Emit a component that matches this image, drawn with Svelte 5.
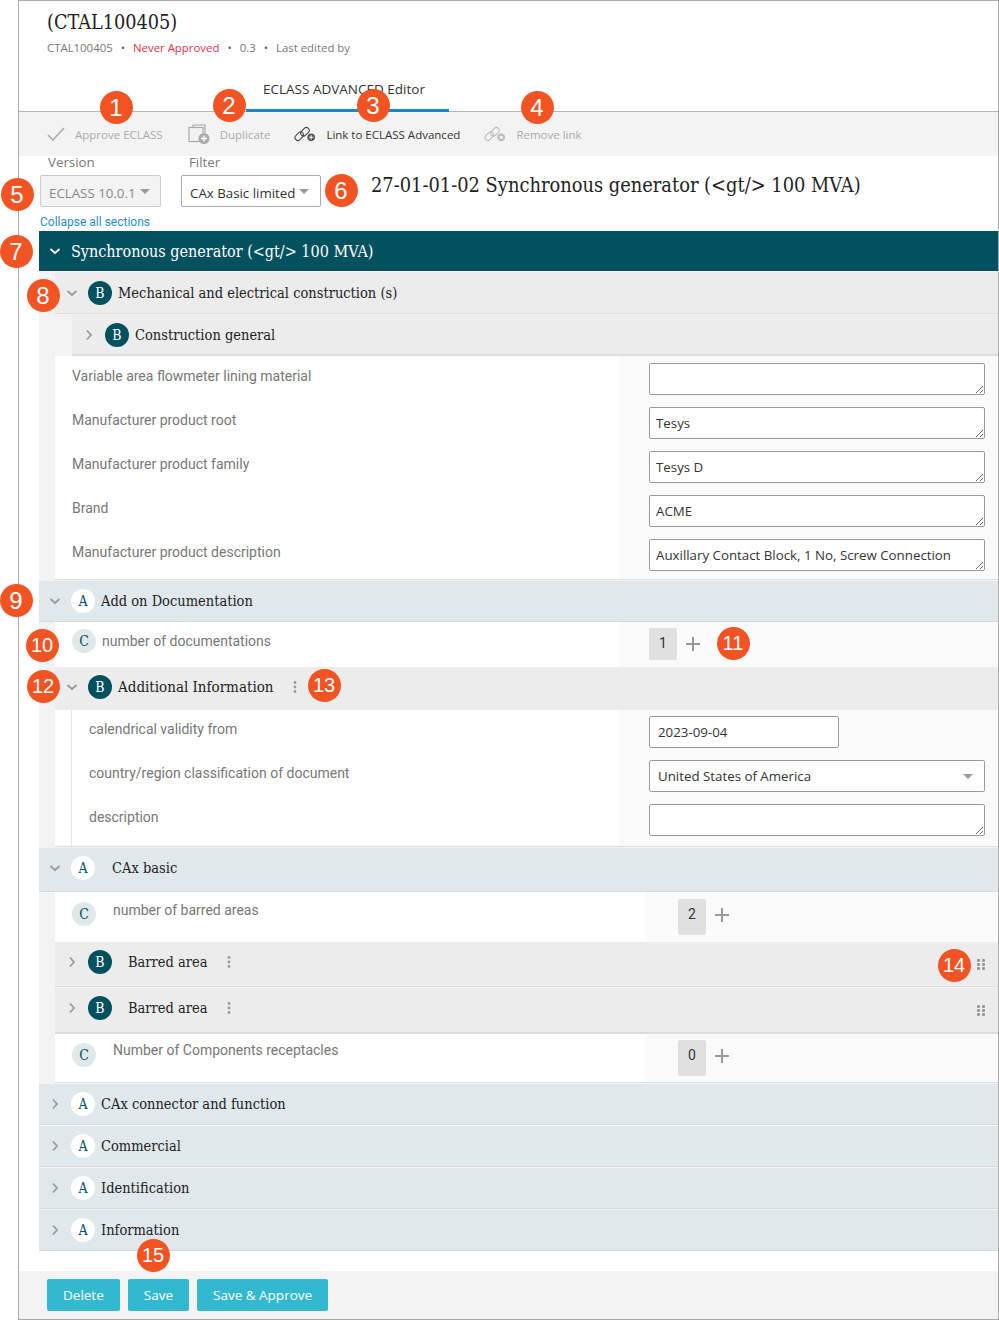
<script>
  const marks = [
    { n: 1, x: 116, y: 107 }, { n: 2, x: 229, y: 105 }, { n: 3, x: 373, y: 105 },
    { n: 4, x: 537, y: 107 }, { n: 5, x: 17, y: 194 }, { n: 6, x: 341, y: 190 },
    { n: 7, x: 16, y: 251 }, { n: 8, x: 43, y: 295 }, { n: 9, x: 16, y: 600 },
    { n: 10, x: 42, y: 645 }, { n: 11, x: 733, y: 643 }, { n: 12, x: 43, y: 686 },
    { n: 13, x: 324, y: 685 }, { n: 14, x: 954, y: 965 }, { n: 15, x: 153, y: 1255 }
  ];

  const construction = [
    { label: 'Variable area flowmeter lining material', value: '' },
    { label: 'Manufacturer product root', value: 'Tesys' },
    { label: 'Manufacturer product family', value: 'Tesys D' },
    { label: 'Brand', value: 'ACME' },
    { label: 'Manufacturer product description', value: 'Auxillary Contact Block, 1 No, Screw Connection' }
  ];

  const collapsed = ['CAx connector and function', 'Commercial', 'Identification', 'Information'];
</script>

{#snippet chevron(open)}
  <svg class="chev" viewBox="0 0 12 12">
    {#if open}
      <path d="M1.5 4 L6 8 L10.5 4" />
    {:else}
      <path d="M4 1.5 L8 6 L4 10.5" />
    {/if}
  </svg>
{/snippet}

{#snippet kebab()}
  <svg class="kebab" viewBox="0 0 4 12">
    <circle cx="2" cy="1.5" r="1.4" /><circle cx="2" cy="6" r="1.4" /><circle cx="2" cy="10.5" r="1.4" />
  </svg>
{/snippet}

{#snippet grip()}
  <svg class="grip" viewBox="0 0 8 11">
    <rect x="0" y="0" width="3" height="3" rx="1" /><rect x="5" y="0" width="3" height="3" rx="1" />
    <rect x="0" y="4" width="3" height="3" rx="1" /><rect x="5" y="4" width="3" height="3" rx="1" />
    <rect x="0" y="8" width="3" height="3" rx="1" /><rect x="5" y="8" width="3" height="3" rx="1" />
  </svg>
{/snippet}

{#snippet plus()}
  <svg class="plus" viewBox="0 0 14 14"><path d="M7 0 V14 M0 7 H14" /></svg>
{/snippet}

{#snippet chain(color)}
  <g fill="none" stroke={color} stroke-width="1.1">
    <rect x="0.5" y="7.3" width="10" height="6" rx="3" transform="rotate(-45 5.5 10.3)" />
    <rect x="6.5" y="2.7" width="10" height="6" rx="3" transform="rotate(-45 11.5 5.7)" />
  </g>
{/snippet}

<div class="frame">
  <header class="head">
    <h1>(CTAL100405)</h1>
    <div class="meta">
      <span>CTAL100405</span><i>•</i><span class="never">Never Approved</span><i>•</i><span>0.3</span><i>•</i><span>Last edited by</span>
    </div>
    <div class="tabs"><span class="tab">ECLASS ADVANCED Editor</span></div>
  </header>

  <div class="toolbar">
    <span class="tool off">
      <svg class="ic-check" viewBox="0 0 18 14"><path d="M1 8 L6 13 L17 1" /></svg>
      Approve ECLASS
    </span>
    <span class="tool off">
      <svg class="ic" viewBox="0 0 22 20">
        <path d="M5 3 V1 H17 V9" fill="none" stroke="#aaa" stroke-width="1.2" />
        <rect x="1" y="3.5" width="14" height="14" fill="#f3f3f3" stroke="#aaa" stroke-width="1.2" />
        <circle cx="16" cy="14.5" r="5.5" fill="#aaa" />
        <path d="M16 11.5 V17.5 M13 14.5 H19" stroke="#fff" stroke-width="1.4" />
      </svg>
      Duplicate
    </span>
    <span class="tool">
      <svg class="ic link" viewBox="0 0 22 16">
        {@render chain('#444')}
        <circle cx="18" cy="11.5" r="4" fill="#555" />
        <path d="M18 9.2 V13.8 M15.7 11.5 H20.3" stroke="#fff" stroke-width="1.1" />
      </svg>
      Link to ECLASS Advanced
    </span>
    <span class="tool off">
      <svg class="ic link" viewBox="0 0 22 16">
        {@render chain('#bbb')}
        <circle cx="18" cy="11.5" r="4" fill="#bbb" />
        <path d="M16.4 9.9 L19.6 13.1 M19.6 9.9 L16.4 13.1" stroke="#fff" stroke-width="1.1" />
      </svg>
      Remove link
    </span>
  </div>

  <div class="filters">
    <div class="field version">
      <span class="cap">Version</span>
      <div class="pick disabled">ECLASS 10.0.1<b class="caret"></b></div>
    </div>
    <div class="field filter">
      <span class="cap">Filter</span>
      <div class="pick">CAx Basic limited<b class="caret"></b></div>
    </div>
    <h2>27-01-01-02 Synchronous generator (&lt;gt/&gt; 100 MVA)</h2>
  </div>
  <a class="collapse" href="#top">Collapse all sections</a>

  <div class="tree">
    <div class="main-row">
      <svg class="chev white" viewBox="0 0 12 12"><path d="M1.5 4 L6 8 L10.5 4" /></svg>
      <span>Synchronous generator (&lt;gt/&gt; 100 MVA)</span>
    </div>

    <div class="body">
      <div class="row b first">
        {@render chevron(true)}<span class="badge bb">B</span><span class="name">Mechanical and electrical construction (s)</span>
      </div>
      <div class="row b nested">
        {@render chevron(false)}<span class="badge bb">B</span><span class="name">Construction general</span>
      </div>
      <div class="fields one">
        {#each construction as f}
          <div class="frow">
            <label class="flabel">{f.label}</label>
            <div class="fval"><textarea value={f.value}></textarea></div>
          </div>
        {/each}
      </div>

      <div class="row a">
        {@render chevron(true)}<span class="badge ba">A</span><span class="name">Add on Documentation</span>
      </div>
      <div class="crow doc">
        <div class="cleft"><span class="badge bc">C</span><span class="clabel">number of documentations</span></div>
        <div class="cright"><span class="count">1</span>{@render plus()}</div>
      </div>
      <div class="row b info">
        {@render chevron(true)}<span class="badge bb">B</span><span class="name">Additional Information</span>{@render kebab()}
      </div>
      <div class="fields two">
        <div class="frow">
          <label class="flabel">calendrical validity from</label>
          <div class="fval"><input class="date" value="2023-09-04" /></div>
        </div>
        <div class="frow">
          <label class="flabel">country/region classification of document</label>
          <div class="fval"><div class="pick wide">United States of America<b class="caret"></b></div></div>
        </div>
        <div class="frow">
          <label class="flabel">description</label>
          <div class="fval"><textarea></textarea></div>
        </div>
      </div>

      <div class="row a cax">
        {@render chevron(true)}<span class="badge ba">A</span><span class="name far">CAx basic</span>
      </div>
      <div class="crow barred">
        <div class="cleft"><span class="badge bc">C</span><span class="clabel far">number of barred areas</span></div>
        <div class="cright"><span class="count">2</span>{@render plus()}</div>
      </div>
      <div class="row b area">
        {@render chevron(false)}<span class="badge bb">B</span><span class="name far">Barred area</span>{@render kebab()}{@render grip()}
      </div>
      <div class="row b area second">
        {@render chevron(false)}<span class="badge bb">B</span><span class="name far">Barred area</span>{@render kebab()}{@render grip()}
      </div>
      <div class="crow recept">
        <div class="cleft"><span class="badge bc">C</span><span class="clabel far">Number of Components receptacles</span></div>
        <div class="cright"><span class="count">0</span>{@render plus()}</div>
      </div>
    </div>

    {#each collapsed as title}
      <div class="row a">
        {@render chevron(false)}<span class="badge ba">A</span><span class="name">{title}</span>
      </div>
    {/each}
  </div>

  <footer class="foot">
    <button>Delete</button>
    <button>Save</button>
    <button>Save &amp; Approve</button>
  </footer>
</div>

{#each marks as m}
  <span class="mark" class:two={m.n > 9} style="left:{m.x - 16.5}px;top:{m.y - 16.5}px">{m.n}</span>
{/each}

<style>
  :global(body) {
    background: #fff;
    font-family: "Open Sans", "Noto Sans", sans-serif;
    color: #333;
  }

  .frame {
    position: relative;
    box-sizing: border-box;
    margin-left: 18px;
    width: 981px;
    height: 1320px;
    border: 1px solid #aaa;
    display: flex;
    flex-direction: column;
  }

  .head {
    box-sizing: border-box;
    height: 111px;
    flex: none;
    border-bottom: 1px solid #b5b5b5;
    padding: 10px 0 0 28px;
    position: relative;
  }
  h1 {
    margin: 0;
    font: 400 19.7px/24px "DejaVu Serif Condensed", "DejaVu Serif", serif;
    color: #222;
  }
  .meta {
    display: flex;
    gap: 8px;
    margin-top: 4px;
    font-size: 11.4px;
    line-height: 18px;
    color: #777;
  }
  .meta i { font-style: normal; color: #666; }
  .never { color: #d9344a; }
  .tabs {
    position: absolute;
    left: 227px;
    bottom: -1px;
    width: 203px;
    height: 36px;
    box-sizing: border-box;
    border-bottom: 3px solid #1488c8;
    text-align: center;
    font-size: 13.5px;
    line-height: 24px;
    color: #333;
    padding: 1px 7px 0 0;
  }

  .toolbar {
    flex: none;
    height: 44px;
    background: #f3f3f3;
    display: flex;
    align-items: center;
    gap: 25px;
    padding: 0 0 0 28px;
    box-sizing: border-box;
  }
  .tool {
    display: flex;
    align-items: center;
    gap: 10px;
    font-size: 11.5px;
    color: #333;
    white-space: nowrap;
  }
  .tool.off { color: #aaa; }
  .ic-check { width: 18px; height: 14px; }
  .ic-check path { fill: none; stroke: #aaa; stroke-width: 1.5; }
  .ic { width: 22px; height: 20px; }
  .ic.link { width: 21px; height: 16px; margin-left: -1px; margin-right: 1px; }

  .filters {
    flex: none;
    height: 51px;
    display: flex;
    padding-left: 21px;
  }
  .field { display: flex; flex-direction: column; }
  .version { width: 141px; }
  .filter { width: 190px; }
  .cap {
    font-size: 13.3px;
    line-height: 12px;
    color: #777;
    height: 19px;
    padding-left: 8px;
  }
  .pick {
    box-sizing: border-box;
    height: 32px;
    display: flex;
    align-items: center;
    gap: 4px;
    padding: 3px 8px 0;
    border: 1px solid #aaa;
    border-radius: 2px;
    background: #fff;
    font-size: 13.3px;
    color: #333;
    white-space: nowrap;
  }
  .pick .caret { margin-top: -3px; }
  .version .pick { width: 121px; }
  .filter .pick { width: 140px; }
  .pick.disabled { background: #f3f3f3; color: #888; border-color: #ccc; }
  .pick.wide { width: 336px; justify-content: space-between; border-color: #999; padding: 0 11px 0 8px; }
  .pick.wide .caret { margin-top: 0; }
  .caret {
    display: inline-block;
    width: 0;
    height: 0;
    border-left: 5px solid transparent;
    border-right: 5px solid transparent;
    border-top: 5px solid #999;
  }
  h2 {
    margin: 18px 0 0 0;
    font: 400 19.85px/24px "DejaVu Serif Condensed", "DejaVu Serif", serif;
    color: #222;
    white-space: nowrap;
  }

  .collapse {
    flex: none;
    margin: 7px 0 0 21px;
    height: 17px;
    font: 12px/17px Roboto, sans-serif;
    color: #2a8ccc;
    text-decoration: none;
  }

  .tree {
    flex: none;
    margin-left: 20px;
    background: #f3f3f3;
  }
  .main-row {
    height: 40px;
    background: #03505f;
    color: #fff;
    display: flex;
    align-items: center;
    gap: 10px;
    padding-left: 10px;
    font: 400 16px "DejaVu Serif Condensed", "DejaVu Serif", serif;
  }

  .row {
    box-sizing: border-box;
    display: flex;
    align-items: center;
    font: 400 14.5px "DejaVu Serif Condensed", "DejaVu Serif", serif;
    color: #222;
  }
  .row.a {
    height: 41px;
    margin-top: 1px;
    padding-left: 10px;
    background: #e0e8eb;
    border-bottom: 1px solid #d8d8d8;
  }
  .row.a.cax { height: 44px; padding-bottom: 3px; }
  .row.b {
    margin-left: 16px;
    padding-left: 11px;
    background: #ececec;
    height: 42px;
    border-bottom: 1px solid #ddd;
  }
  .row.b.first { margin-top: 1px; }
  .row.b.nested { margin-left: 33px; margin-top: 1px; height: 41px; border-bottom: 2px solid #ddd; }
  .row.b.info { height: 43px; border-bottom: 0; padding-bottom: 3px; font-size: 15px; }
  .row.b.area { height: 45px; padding-bottom: 5px; position: relative; }
  .row.b.second { height: 46px; margin-top: 1px; padding-bottom: 5px; border-bottom-width: 2px; }

  .chev { width: 12px; height: 12px; flex: none; margin-right: 10px; }
  .chev path { fill: none; stroke: #999; stroke-width: 1.7; }
  .chev.white { margin-right: 0; }
  .chev.white path { stroke: #fff; }

  .badge {
    box-sizing: border-box;
    width: 24px;
    height: 24px;
    flex: none;
    border-radius: 50%;
    display: inline-flex;
    align-items: center;
    justify-content: center;
    font: 400 14px "DejaVu Serif Condensed", "DejaVu Serif", serif;
  }
  .bb { background: #03505f; color: #fff; }
  .ba { background: #fff; color: #03505f; }
  .bc { background: #e0e8eb; color: #03505f; }

  .name { margin-left: 6px; white-space: nowrap; }
  .name.far { margin-left: 17px; }
  .area .name.far { margin-left: 16px; }

  .kebab { width: 4px; height: 12px; margin-left: 19px; }
  .kebab circle { fill: #999; }
  .grip { width: 8px; height: 11px; margin-left: auto; margin-right: 13px; margin-top: 6px; }
  .grip rect { fill: #999; }

  .fields {
    margin-left: 16px;
    background: #fff;
    border-bottom: 1px solid #ddd;
  }
  .frow {
    display: grid;
    grid-template-columns: 564px 1fr;
    height: 44px;
  }
  .one .frow:first-child { height: 51px; }
  .one .frow:first-child .flabel { padding-top: 11px; }
  .one .frow:first-child .fval { padding-top: 7px; }
  .one .frow:last-child { height: 40px; }
  .two .frow:first-child { height: 50px; }
  .two .frow:first-child .flabel { padding-top: 10px; }
  .two .frow:first-child .fval { padding-top: 6px; }
  .two .frow:last-child { height: 42px; }
  .flabel {
    display: block;
    box-sizing: border-box;
    padding: 4px 0 0 17px;
    font: 400 14px/18px Roboto, sans-serif;
    color: #777;
    height: 100%;
  }
  .two .flabel { margin-left: 16px; padding-left: 17px; border-left: 1px solid #e5e5e5; }
  .fval {
    box-sizing: border-box;
    background: #fafafa;
    padding-left: 30px;
    height: 100%;
  }

  textarea, .date {
    display: block;
    box-sizing: border-box;
    height: 32px;
    margin: 0;
    border: 1px solid #999;
    border-radius: 2px;
    background: #fff;
    color: #333;
    font: 13.3px/20px "Open Sans", "Noto Sans", sans-serif;
    outline: none;
  }
  textarea { width: 336px; padding: 5px 6px; overflow: hidden; }
  .date { width: 190px; padding: 0 8px; }

  .crow {
    box-sizing: border-box;
    margin-left: 16px;
    display: grid;
    grid-template-columns: 564px 1fr;
    background: #fff;
  }
  .crow.doc { height: 45px; }
  .crow.barred { height: 50px; grid-template-columns: 591px 1fr; }
  .crow.recept { height: 49px; grid-template-columns: 591px 1fr; border-bottom: 1px solid #ddd; }
  .cleft { display: flex; align-items: flex-start; padding: 7px 0 0 17px; }
  .barred .cleft { padding-top: 10px; }
  .recept .cleft { padding-top: 9px; }
  .clabel {
    margin-left: 6px;
    font: 400 14px/24px Roboto, sans-serif;
    color: #777;
    white-space: nowrap;
  }
  .clabel.far { margin-left: 17px; margin-top: -4px; }
  .recept .clabel.far { margin-top: -5px; }
  .cright { background: #fafafa; display: flex; align-items: flex-start; padding: 6px 0 0 30px; }
  .barred .cright { padding: 7px 0 0 32px; }
  .recept .cright { padding-left: 32px; }
  .count {
    width: 28px;
    height: 32px;
    flex: none;
    background: #e0e0e0;
    border-radius: 2px;
    font: 14px/30px Roboto, sans-serif;
    color: #333;
    text-align: center;
  }
  .barred .count, .recept .count { height: 36px; }
  .plus { width: 14px; height: 14px; margin: 9px 0 0 9px; }
  .plus path { stroke: #999; stroke-width: 2; fill: none; }

  .foot {
    margin-top: auto;
    flex: none;
    height: 48px;
    background: #f3f3f3;
    display: flex;
    align-items: center;
    gap: 8px;
    padding-left: 28px;
  }
  .foot button {
    height: 32px;
    padding: 0 16px;
    border: 0;
    border-radius: 2px;
    background: #33b9cf;
    color: #fff;
    font: 13.5px "Open Sans", "Noto Sans", sans-serif;
  }

  .mark {
    position: absolute;
    width: 33px;
    height: 33px;
    border-radius: 50%;
    background: #f15323;
    color: #fff;
    font: 400 24px/33px "Liberation Sans", Arial, sans-serif;
    text-align: center;
  }
  .mark.two { font-size: 20px; }
</style>
